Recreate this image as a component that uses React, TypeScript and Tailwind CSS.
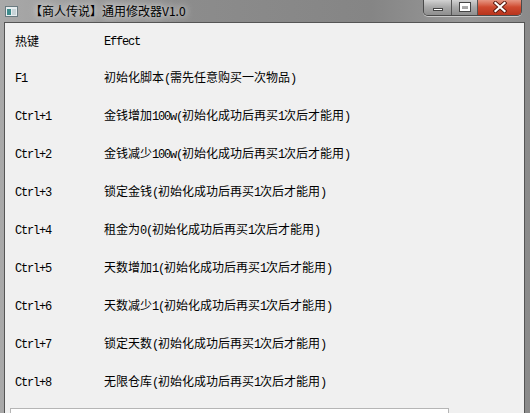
import type { ReactNode } from 'react';

// ── 数据 ─────────────────────────────────────────────────────

const ROWS: { key: string; effect: string }[] = [
  { key: 'F1', effect: '初始化脚本(需先任意购买一次物品)' },
  { key: 'Ctrl+1', effect: '金钱增加100w(初始化成功后再买1次后才能用)' },
  { key: 'Ctrl+2', effect: '金钱减少100w(初始化成功后再买1次后才能用)' },
  { key: 'Ctrl+3', effect: '锁定金钱(初始化成功后再买1次后才能用)' },
  { key: 'Ctrl+4', effect: '租金为0(初始化成功后再买1次后才能用)' },
  { key: 'Ctrl+5', effect: '天数增加1(初始化成功后再买1次后才能用)' },
  { key: 'Ctrl+6', effect: '天数减少1(初始化成功后再买1次后才能用)' },
  { key: 'Ctrl+7', effect: '锁定天数(初始化成功后再买1次后才能用)' },
  { key: 'Ctrl+8', effect: '无限仓库(初始化成功后再买1次后才能用)' },
];

// 半角字符用等宽字体，模拟宋体的 6px 半角
function Mixed({ text }: { text: string }): ReactNode {
  const parts = text.split(/([\x00-\x7f]+)/).filter(Boolean);
  return (
    <>
      {parts.map((p, i) =>
        /^[\x00-\x7f]+$/.test(p) ? (
          <span key={i} className="font-['Liberation_Mono',monospace] text-[12px] tracking-[-1.2px]">
            {p}
          </span>
        ) : (
          <span key={i}>{p}</span>
        ),
      )}
    </>
  );
}

function Row({ k, effect, h = 'h-[38px]' }: { k: string; effect: string; h?: string }) {
  return (
    <div className={`flex items-center ${h}`}>
      <div className="w-[99px] pl-[10px] shrink-0">
        <Mixed text={k} />
      </div>
      <div>
        <Mixed text={effect} />
      </div>
    </div>
  );
}

// ── 标题栏按钮 ───────────────────────────────────────────────

function CaptionButtons() {
  return (
    <div className="flex h-[17px] -mt-[1px] rounded-b-[5px] border border-[#4a4a4a] border-t-0 overflow-hidden shadow-[0_1px_0_rgba(255,255,255,0.5)]">
      <div className="w-[28px] flex items-center justify-center bg-gradient-to-b from-[#d8d8d8] via-[#a9a9a9] to-[#8e8e8e] border-r border-[#555]">
        <div className="w-[10px] h-[3px] mt-[4px] bg-white border border-[#444]" />
      </div>
      <div className="w-[26px] flex items-center justify-center bg-gradient-to-b from-[#d8d8d8] via-[#a9a9a9] to-[#8e8e8e] border-r border-[#555]">
        <div className="w-[10px] h-[8px] border-[2px] border-t-[3px] border-white outline outline-1 outline-[#444]" />
      </div>
      <div className="w-[43px] flex items-center justify-center bg-gradient-to-b from-[#e8a08e] via-[#cf4a30] to-[#b8341c]">
        <svg width="14" height="12" viewBox="0 0 14 12">
          <path d="M2.5 2 L11.5 10 M11.5 2 L2.5 10" stroke="#5a1a10" strokeWidth="4" strokeLinecap="square" />
          <path d="M2.5 2 L11.5 10 M11.5 2 L2.5 10" stroke="#fff" strokeWidth="2.2" strokeLinecap="square" />
        </svg>
      </div>
    </div>
  );
}

// ── App ──────────────────────────────────────────────────────

export default function App() {
  return (
    <div className="w-[530px] h-[413px] overflow-hidden flex flex-col bg-[linear-gradient(90deg,#a9a9a9_0%,#8c8c8c_35%,#858585_70%,#989898_88%,#8a8a8a_100%)] font-['Noto_Sans_CJK_SC',sans-serif] text-[12px] text-black">
      {/* 标题栏 */}
      <div className="h-[22px] shrink-0 flex items-start">
        <div className="flex items-center h-[21px] pl-[5px]">
          <svg width="13" height="11" viewBox="0 0 13 11" className="mt-[1px]">
            <rect x="0.5" y="0.5" width="12" height="10" fill="#e8eef0" stroke="#6a7a80" />
            <rect x="2" y="3" width="4" height="6" fill="#3e8c8c" />
            <rect x="7" y="3" width="4" height="6" fill="#c8d4d8" />
          </svg>
          <span className="ml-[12px] text-[12px] leading-none [text-shadow:0_0_6px_#e0e0e0,0_0_10px_#d8d8d8]">
            【商人传说】通用修改器V1.0
          </span>
        </div>
        <div className="ml-auto mr-[8px]">
          <CaptionButtons />
        </div>
      </div>

      {/* 客户区 */}
      <div className="flex-1 ml-[4px] mr-[5px] border border-[#555] border-b-0 bg-[#f0f0f0] overflow-hidden">
        <Row k="热键" effect="Effect" h="h-[36px]" />
        {ROWS.map((r) => (
          <Row key={r.key} k={r.key} effect={r.effect} />
        ))}
        <div className="mt-[7px] ml-[5px] w-[439px] h-[20px] bg-white border border-[#b5b5b5]" />
      </div>
    </div>
  );
}
